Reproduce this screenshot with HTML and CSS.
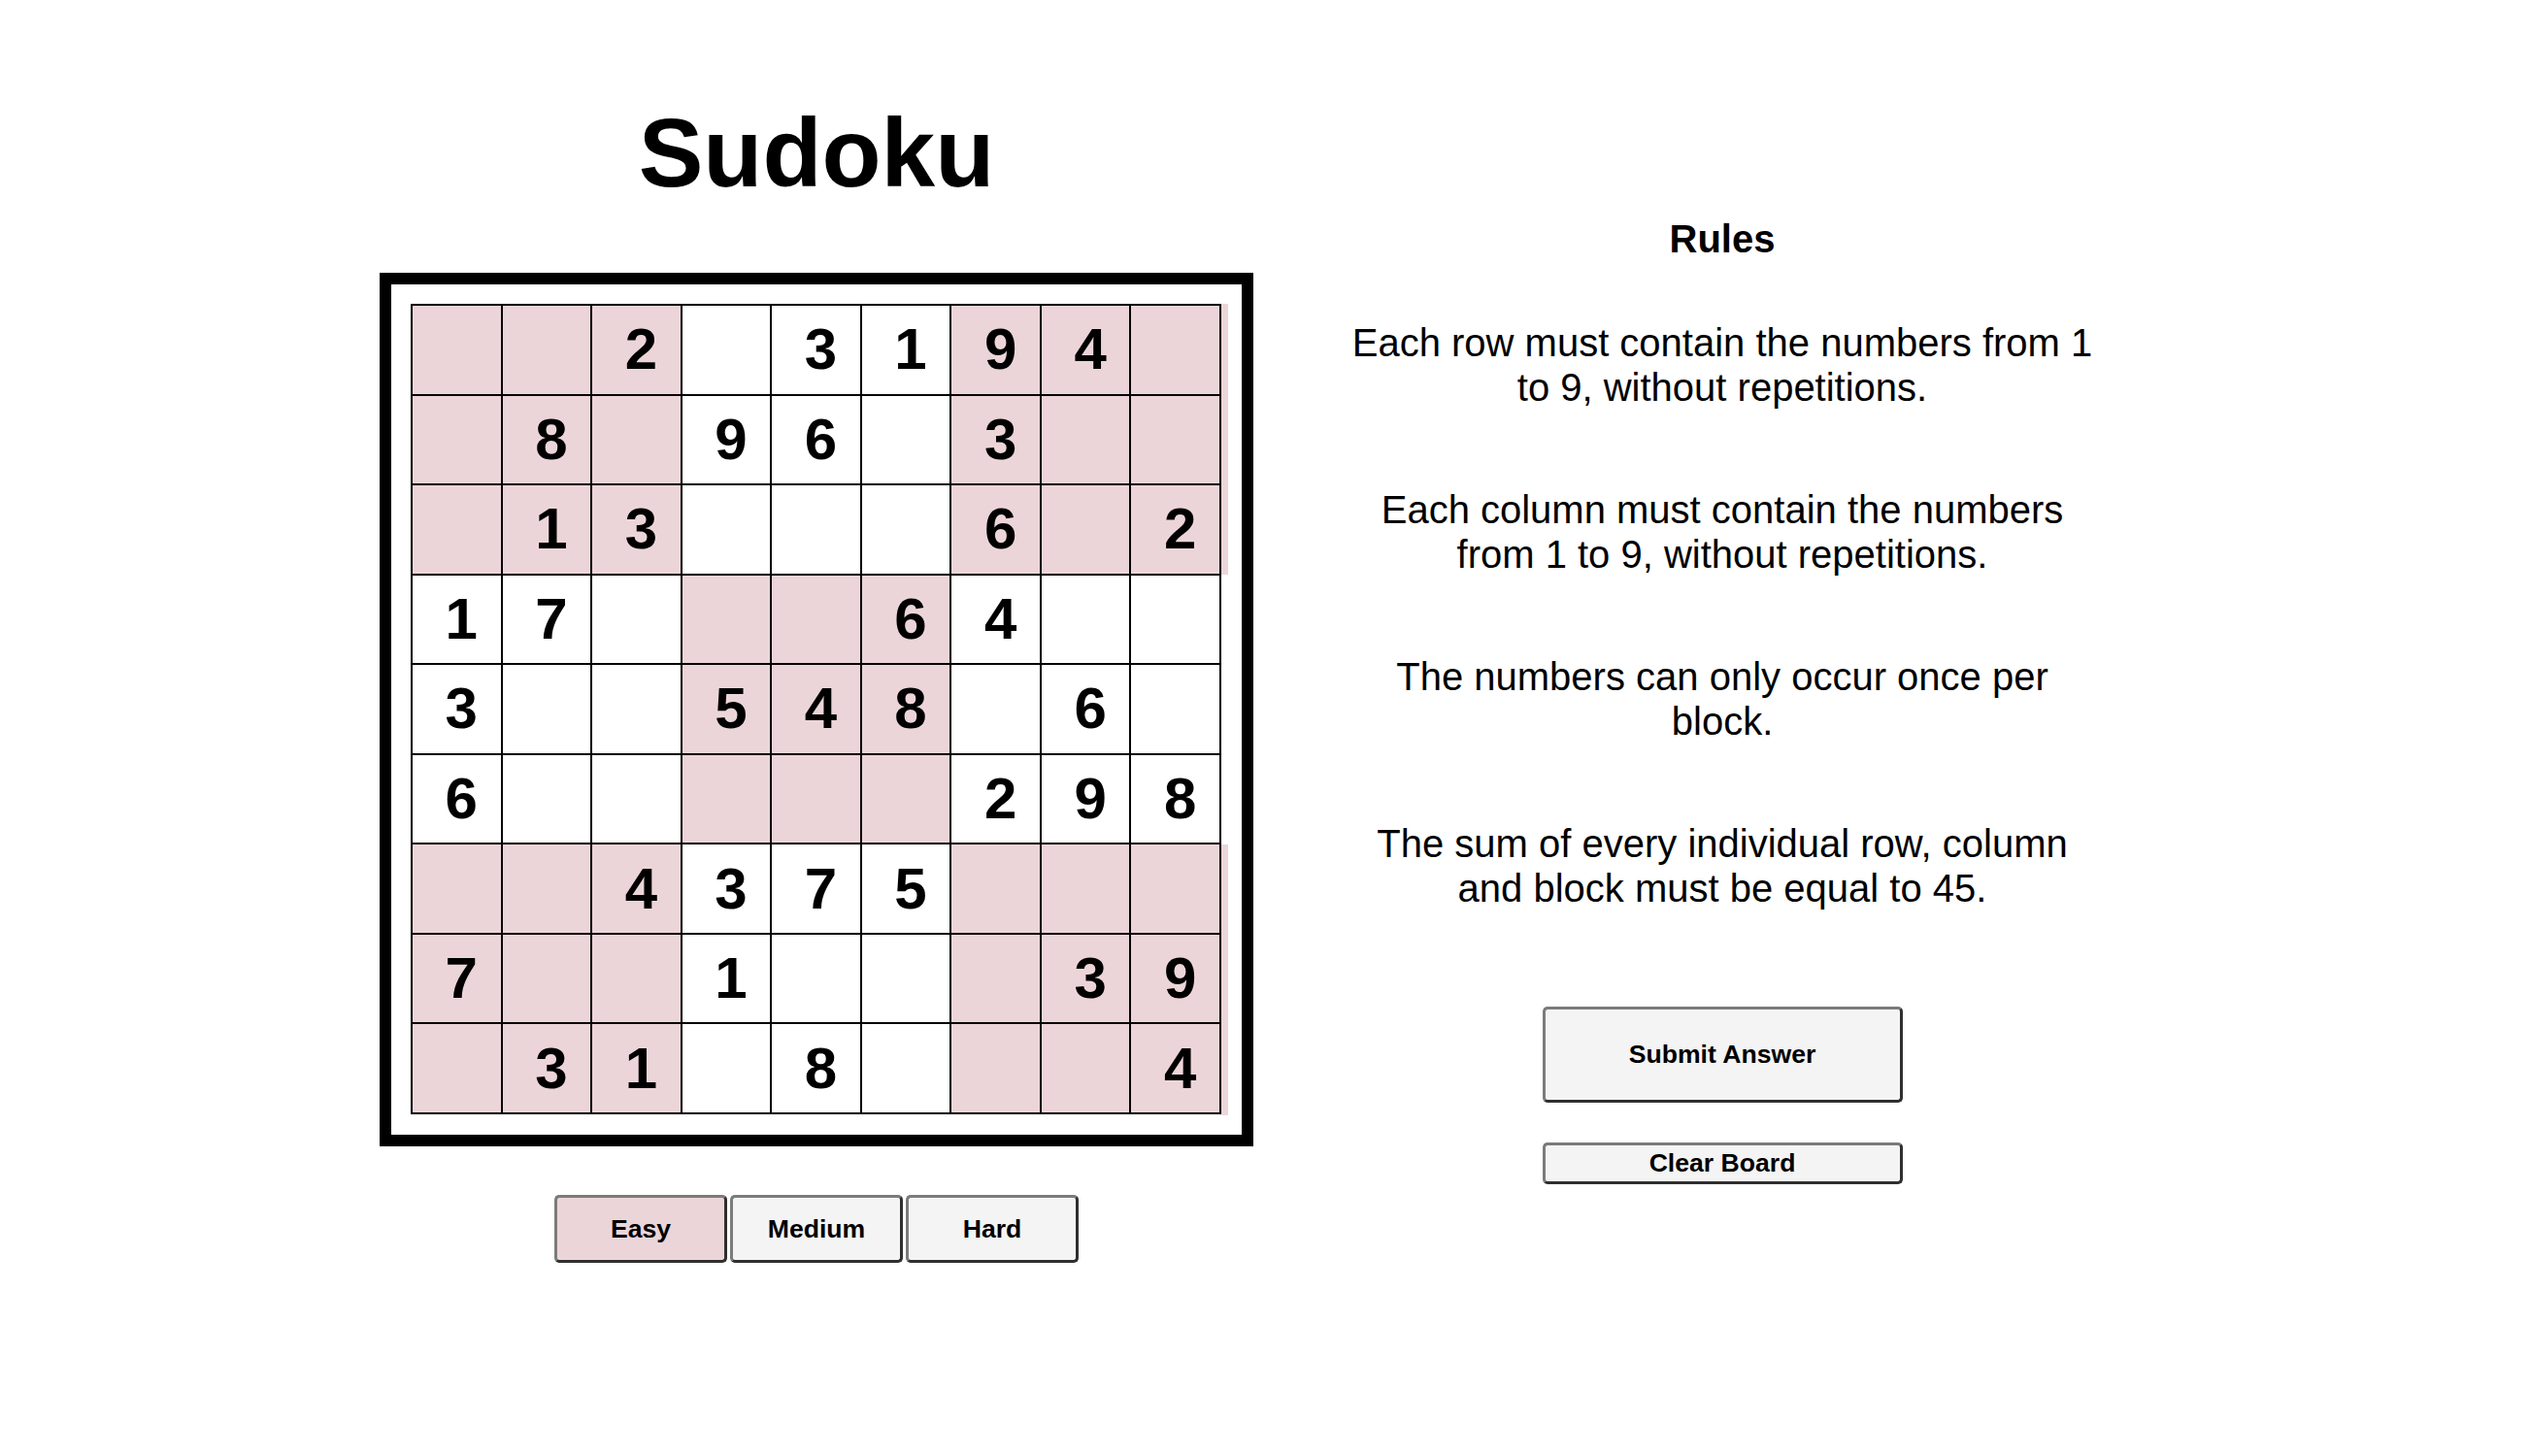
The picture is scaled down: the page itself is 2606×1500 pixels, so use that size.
FILE: index.html
```html
<!DOCTYPE html>
<html lang="en">
<head>
<meta charset="utf-8">
<title>Sudoku</title>
<link rel="stylesheet" href="styles.css">
</head>
<body>
<main class="page">
  <section class="game">
    <h1 class="title">Sudoku</h1>
    <div class="board">
      <div class="grid">
        <div class="cell p"></div><div class="cell p"></div><div class="cell p">2</div><div class="cell"></div><div class="cell">3</div><div class="cell">1</div><div class="cell p">9</div><div class="cell p">4</div><div class="cell p"></div>
        <div class="cell p"></div><div class="cell p">8</div><div class="cell p"></div><div class="cell">9</div><div class="cell">6</div><div class="cell"></div><div class="cell p">3</div><div class="cell p"></div><div class="cell p"></div>
        <div class="cell p"></div><div class="cell p">1</div><div class="cell p">3</div><div class="cell"></div><div class="cell"></div><div class="cell"></div><div class="cell p">6</div><div class="cell p"></div><div class="cell p">2</div>
        <div class="cell">1</div><div class="cell">7</div><div class="cell"></div><div class="cell p"></div><div class="cell p"></div><div class="cell p">6</div><div class="cell">4</div><div class="cell"></div><div class="cell"></div>
        <div class="cell">3</div><div class="cell"></div><div class="cell"></div><div class="cell p">5</div><div class="cell p">4</div><div class="cell p">8</div><div class="cell"></div><div class="cell">6</div><div class="cell"></div>
        <div class="cell">6</div><div class="cell"></div><div class="cell"></div><div class="cell p"></div><div class="cell p"></div><div class="cell p"></div><div class="cell">2</div><div class="cell">9</div><div class="cell">8</div>
        <div class="cell p"></div><div class="cell p"></div><div class="cell p">4</div><div class="cell">3</div><div class="cell">7</div><div class="cell">5</div><div class="cell p"></div><div class="cell p"></div><div class="cell p"></div>
        <div class="cell p">7</div><div class="cell p"></div><div class="cell p"></div><div class="cell">1</div><div class="cell"></div><div class="cell"></div><div class="cell p"></div><div class="cell p">3</div><div class="cell p">9</div>
        <div class="cell p"></div><div class="cell p">3</div><div class="cell p">1</div><div class="cell"></div><div class="cell">8</div><div class="cell"></div><div class="cell p"></div><div class="cell p"></div><div class="cell p">4</div>
      </div>
      <div class="bleed"><span class="bleed-p"></span><span></span><span class="bleed-p"></span></div>
    </div>
    <div class="levels">
      <button class="btn level active">Easy</button>
      <button class="btn level">Medium</button>
      <button class="btn level">Hard</button>
    </div>
  </section>
  <aside class="rules">
    <h2 class="rules-title">Rules</h2>
    <div class="rule-list">
      <p class="rule">Each row must contain the numbers from 1 to 9, without repetitions.</p>
      <p class="rule">Each column must contain the numbers from 1 to 9, without repetitions.</p>
      <p class="rule">The numbers can only occur once per block.</p>
      <p class="rule">The sum of every individual row, column and block must be equal to 45.</p>
    </div>
    <div class="actions">
      <button class="btn submit">Submit Answer</button>
      <button class="btn clear">Clear Board</button>
    </div>
  </aside>
</main>
</body>
</html>
```

FILE: styles.css
```css
html, body {
  margin: 0;
  padding: 0;
  background: #ffffff;
  color: #000000;
  font-family: "Liberation Sans", Arial, Helvetica, sans-serif;
}

.page {
  display: flex;
  align-items: flex-start;
  gap: 98px;
  padding: 100px 0 0 391px;
}

.game {
  width: 900px;
  display: flex;
  flex-direction: column;
  align-items: center;
}

.title {
  margin: 0;
  font-size: 100px;
  line-height: 115px;
  font-weight: bold;
}

.board {
  margin-top: 66px;
  box-sizing: border-box;
  width: 900px;
  height: 900px;
  border: 12px solid #000;
  padding: 20px;
  display: flex;
}

.grid {
  flex: none;
  box-sizing: border-box;
  width: 835px;
  height: 835px;
  display: grid;
  grid-template-columns: repeat(9, 1fr);
  grid-template-rows: repeat(9, 1fr);
  gap: 2px;
  padding: 2px;
  background: #000;
}

.cell {
  background: #ffffff;
  display: flex;
  align-items: center;
  justify-content: center;
  padding-left: 10px;
  font-size: 60px;
  font-weight: bold;
  line-height: 1;
}

.cell.p {
  background: #ecd5d8;
}

.bleed {
  flex: none;
  width: 7px;
  display: grid;
  grid-template-rows: repeat(3, 1fr);
}

.bleed-p {
  background: #ecd5d8;
}

.levels {
  margin-top: 50px;
  display: flex;
  gap: 3px;
}

.btn {
  box-sizing: border-box;
  margin: 0;
  padding: 0;
  font-family: "Liberation Sans", Arial, Helvetica, sans-serif;
  font-size: 26.6px;
  font-weight: bold;
  color: #000;
  background: #f4f4f4;
  border: 3px solid;
  border-color: #7b7b7b #2f2f2f #2f2f2f #7b7b7b;
  border-radius: 5px;
}

.level {
  width: 178px;
  height: 70px;
}

.level.active {
  background: #ecd5d8;
}

.rules {
  width: 770px;
  display: flex;
  flex-direction: column;
  align-items: center;
  text-align: center;
  padding-top: 123px;
}

.rules-title {
  margin: 0;
  font-size: 40px;
  line-height: 46px;
  font-weight: bold;
}

.rule-list {
  margin-top: 61px;
  display: flex;
  flex-direction: column;
  gap: 80px;
}

.rule {
  margin: 0;
  font-size: 40px;
  line-height: 46px;
}

.actions {
  margin-top: 99px;
  display: flex;
  flex-direction: column;
  align-items: center;
  gap: 41px;
}

.submit {
  width: 371px;
  height: 99px;
}

.clear {
  width: 371px;
  height: 43px;
}
```
